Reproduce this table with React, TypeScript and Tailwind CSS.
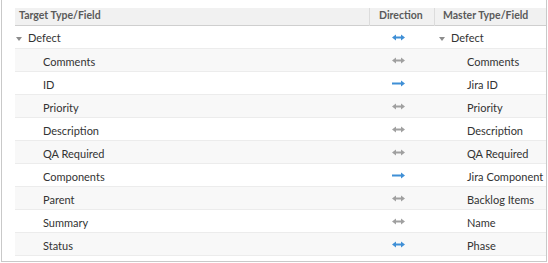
import React from 'react';

type Dir = 'both' | 'right';

interface Mapping {
    target: string;
    master: string;
    dir: Dir;
    blue: boolean;
}

// Field mappings shown under the "Defect" type
const mappings: Mapping[] = [
    { target: 'Comments', master: 'Comments', dir: 'both', blue: false },
    { target: 'ID', master: 'Jira ID', dir: 'right', blue: true },
    { target: 'Priority', master: 'Priority', dir: 'both', blue: false },
    { target: 'Description', master: 'Description', dir: 'both', blue: false },
    { target: 'QA Required', master: 'QA Required', dir: 'both', blue: false },
    { target: 'Components', master: 'Jira Component', dir: 'right', blue: true },
    { target: 'Parent', master: 'Backlog Items', dir: 'both', blue: false },
    { target: 'Summary', master: 'Name', dir: 'both', blue: false },
    { target: 'Status', master: 'Phase', dir: 'both', blue: true },
];

const Arrow = ({ dir, blue }: { dir: Dir; blue: boolean }) => (
    <svg width="13" height="7" viewBox="0 0 13 7" className={blue ? 'text-[#3f8fd6]' : 'text-[#a0a0a0]'}>
        {dir === 'both' ? (
            <>
                <rect x="3" y="2.5" width="7" height="2" fill="currentColor" />
                <polygon points="0,3.5 4,0.5 4,6.5" fill="currentColor" />
                <polygon points="13,3.5 9,0.5 9,6.5" fill="currentColor" />
            </>
        ) : (
            <>
                <rect x="0" y="2.5" width="10" height="2" fill="currentColor" />
                <polygon points="13,3.5 9,0.5 9,6.5" fill="currentColor" />
            </>
        )}
    </svg>
);

const Caret = () => (
    <svg width="6" height="4" viewBox="0 0 6 4" className="text-[#8c8c8c]">
        <polygon points="0,0 6,0 3,4" fill="currentColor" />
    </svg>
);

const App = () => {
    return (
        <div className="w-[548px] h-[263px] bg-white font-['Lato',sans-serif] text-[11px] text-[#333]">
            <div className="ml-[1px] w-[546px] h-[262px] border-x border-b border-[#c9c9c9] pl-[13px] pt-[8px]">
                {/* Header */}
                <div className="grid grid-cols-[354px_65px_111px] h-[18px] bg-[#f1f1f1] border-b border-[#cfcfcf] font-bold text-[10.5px] text-[#5a5a5a]">
                    <div className="pl-[4px] pb-[2px] flex items-center">Target Type/Field</div>
                    <div className="pl-[9px] pb-[2px] flex items-center border-l border-[#dcdcdc]">Direction</div>
                    <div className="pl-[8px] pb-[2px] flex items-center border-l border-[#dcdcdc]">Master Type/Field</div>
                </div>

                {/* Parent type row */}
                <div className="grid grid-cols-[354px_65px_111px] h-[23px] border-b border-[#ececec] bg-white">
                    <div className="flex items-center pl-[1px] pt-[3px] gap-[6px]">
                        <Caret />
                        <span>Defect</span>
                    </div>
                    <div className="flex items-center justify-center pr-[6px] pt-[1px]">
                        <Arrow dir="both" blue />
                    </div>
                    <div className="flex items-center pl-[5px] pt-[3px] gap-[6px]">
                        <Caret />
                        <span>Defect</span>
                    </div>
                </div>

                {/* Field rows */}
                {mappings.map((m, i) => (
                    <div
                        key={m.target}
                        className={`grid grid-cols-[354px_65px_111px] h-[23px] border-b border-[#ececec] ${i % 2 === 0 ? 'bg-[#f8f8f8]' : 'bg-white'}`}
                    >
                        <div className="flex items-center pl-[28px] pt-[4px]">{m.target}</div>
                        <div className="flex items-center justify-center pr-[6px] pt-[1px]">
                            <Arrow dir={m.dir} blue={m.blue} />
                        </div>
                        <div className="flex items-center pl-[33px] pt-[4px]">{m.master}</div>
                    </div>
                ))}
            </div>
        </div>
    );
};

export default App;
